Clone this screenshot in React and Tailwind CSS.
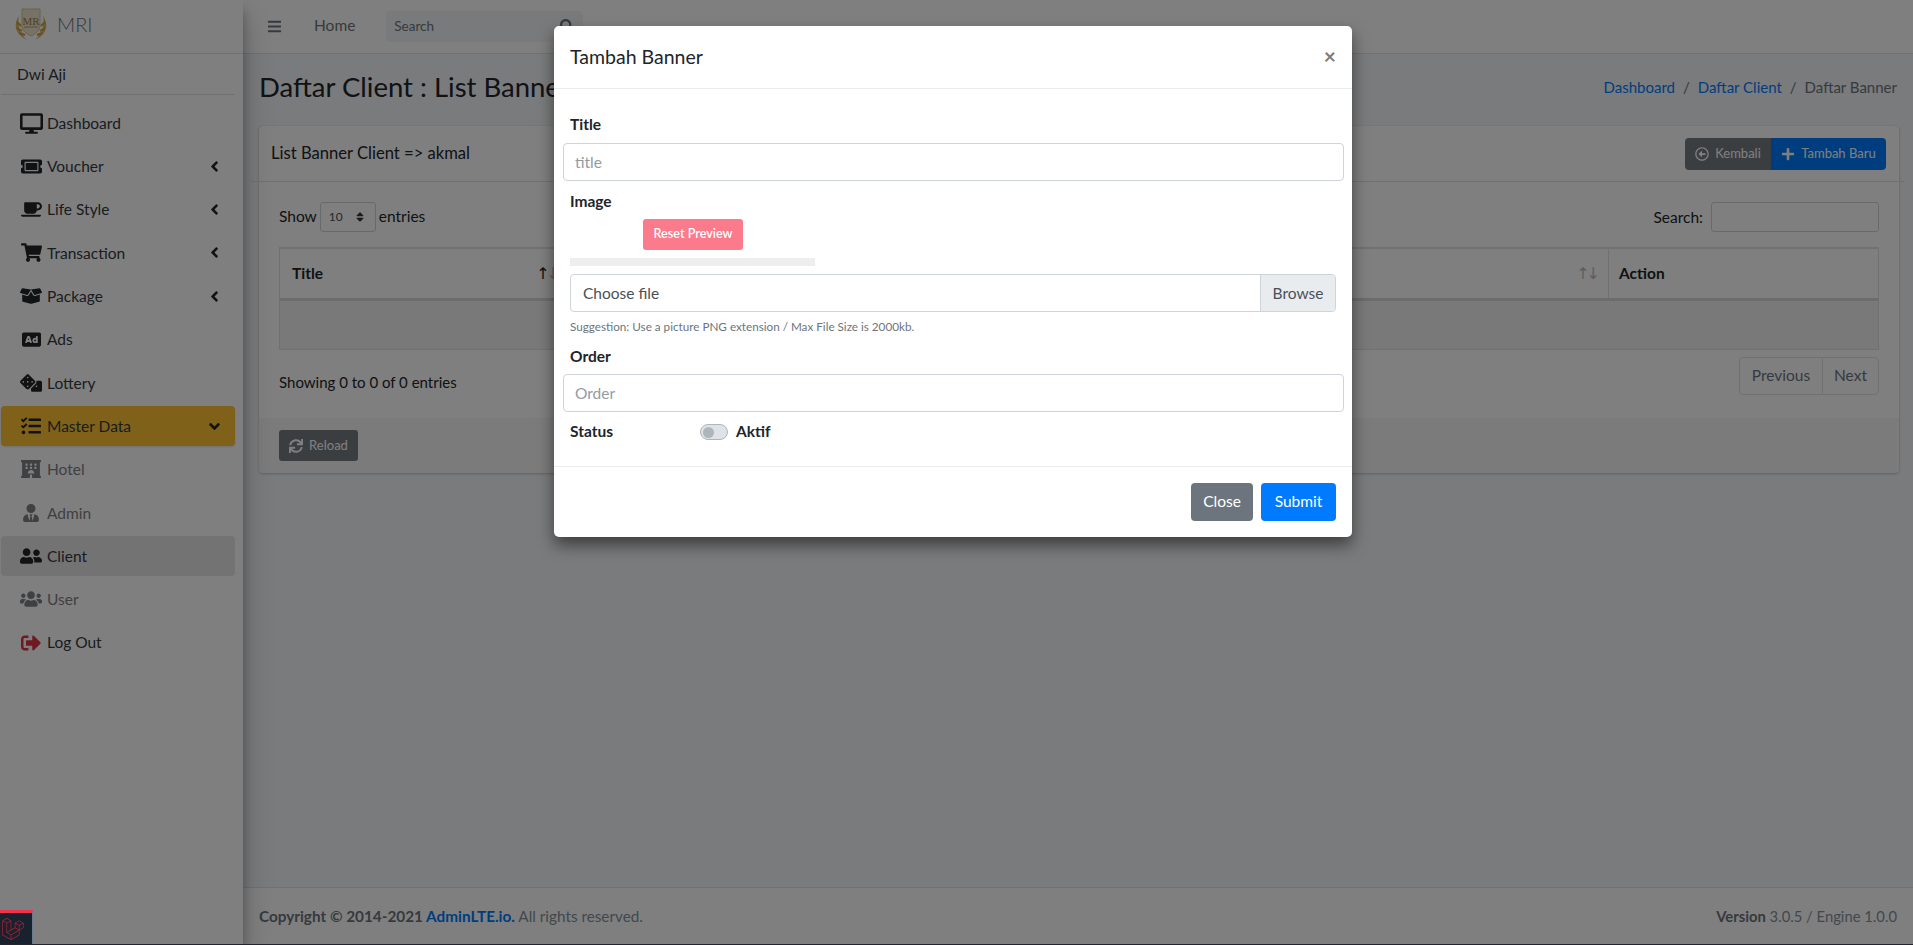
import React from "react";
import {
  FaDesktop, FaTicketAlt, FaCoffee, FaShoppingCart, FaBoxOpen, FaAd, FaDice, FaTasks, FaHotel, FaUserTie,
  FaUserFriends, FaUsers, FaSignOutAlt, FaBars, FaSearch, FaAngleLeft, FaAngleDown, FaRegArrowAltCircleLeft,
  FaPlus, FaSync, FaLaravel, FaSort,
} from "react-icons/fa";

const items = [
  { label: "Dashboard", Icon: FaDesktop, size: 23 },
  { label: "Voucher", Icon: FaTicketAlt, arrow: true },
  { label: "Life Style", Icon: FaCoffee, arrow: true },
  { label: "Transaction", Icon: FaShoppingCart, arrow: true },
  { label: "Package", Icon: FaBoxOpen, arrow: true, size: 22 },
  { label: "Ads", Icon: FaAd, size: 19 },
  { label: "Lottery", Icon: FaDice, size: 22 },
  { label: "Master Data", Icon: FaTasks, arrow: "down", active: "yellow", size: 20 },
  { label: "Hotel", Icon: FaHotel, muted: true, size: 20 },
  { label: "Admin", Icon: FaUserTie, muted: true, size: 18 },
  { label: "Client", Icon: FaUserFriends, active: "gray", size: 22 },
  { label: "User", Icon: FaUsers, muted: true, size: 22 },
  { label: "Log Out", Icon: FaSignOutAlt, red: true, size: 20 },
];

function Logo() {
  return (
    <svg viewBox="0 0 34 34" className="w-[34px] h-[34px] shrink-0">
      <path d="M5 9C-1 17 1 28 13 33C6 27 3 18 5 9Z" fill="#dcb45e" />
      <path d="M29 9C35 17 33 28 21 33C28 27 31 18 29 9Z" fill="#dcb45e" />
      <path d="M3 15L7 19M3 21L8 24M6 26L11 28" stroke="#c99f4b" strokeWidth="2" />
      <path d="M31 15L27 19M31 21L26 24M28 26L23 28" stroke="#c99f4b" strokeWidth="2" />
      <path d="M8 2H26V19C26 24 21 27 17 29C13 27 8 24 8 19Z" fill="#efe4cc" stroke="#d9c393" />
      <text x="17" y="18" textAnchor="middle" fontSize="11" fontFamily="Liberation Serif, serif" fill="#9c7f45">MR</text>
      <path d="M10 20H24" stroke="#b99a5c" strokeWidth="1" />
    </svg>
  );
}

function NavItem({ label, Icon, arrow, active, muted, red, size = 21 }) {
  const bg = active === "yellow" ? "bg-[#ffc233] shadow-sm" : active === "gray" ? "bg-[#e7e7e7]" : "";
  const text = muted ? "text-[#7d8085]" : "text-[#343a40]";
  const iconColor = red ? "text-[#dc3545]" : muted ? "text-[#7d8085]" : "text-[#212529]";
  return (
    <div className={`relative flex items-center h-10 mb-[3.3px] mx-px w-[234px] rounded-[4px] ${bg}`}>
      <span className={`w-[46px] flex justify-center pl-[14px] ${iconColor}`}>
        <Icon size={size} />
      </span>
      <span className={`text-[15.5px] pt-px ${text}`}>{label}</span>
      {arrow && (
        <span className="ml-auto mr-[12px] text-[#212529]">
          {arrow === "down" ? <FaAngleDown size={17} /> : <FaAngleLeft size={17} />}
        </span>
      )}
    </div>
  );
}

function Sidebar() {
  return (
    <aside className="w-[243px] shrink-0 bg-white h-full flex flex-col shadow-[0_14px_28px_rgba(0,0,0,0.25),0_10px_10px_rgba(0,0,0,0.22)] relative z-10">
      <div className="h-[54px] shrink-0 border-b border-[#dee2e6] flex items-center pl-[14px] gap-[9px] pb-[6px]">
        <Logo />
        <span className="text-[20px] font-light text-[#6c757d]">MRI</span>
      </div>
      <div className="h-[41px] mx-px w-[234px] shrink-0 border-b border-[#dee2e6] flex items-center pl-4 pt-px text-[15.5px] text-[#343a40]">
        Dwi Aji
      </div>
      <nav className="pt-2">
        {items.map((it) => (
          <NavItem key={it.label} {...it} />
        ))}
      </nav>
    </aside>
  );
}

function Navbar() {
  return (
    <header className="h-[54px] shrink-0 bg-white border-b border-[#dee2e6] flex items-center pl-[24px] pb-px">
      <FaBars size={15} className="text-[#6c757d]" />
      <span className="ml-[32px] text-[15.5px] text-[#6c757d]">Home</span>
      <div className="ml-[31px] w-[197px] h-[31px] bg-[#f2f4f6] rounded-[4px] flex items-center pl-[8px] pr-[9px] justify-between">
        <span className="text-[13.5px] text-[#6c757d]">Search</span>
        <FaSearch size={14} className="text-[#6c757d]" />
      </div>
    </header>
  );
}

function SortIcon({ dark }) {
  return (
    <span className="flex items-center text-[16px] font-normal -space-x-[3px]" style={{ fontFamily: '"DejaVu Sans", sans-serif' }}>
      <span className={dark ? "text-[#212529]" : "text-[#b9bbbd]"}>↑</span>
      <span className="text-[#b9bbbd]">↓</span>
    </span>
  );
}

function Card() {
  return (
    <section className="ml-4 mr-[14px] h-[347px] bg-white rounded-[4px] shadow-[0_0_1px_rgba(0,0,0,0.125),0_1px_3px_rgba(0,0,0,0.2)] flex flex-col">
      <div className="-ml-2 -mr-[6px] h-[56px] shrink-0 border-b border-[#dee2e6] flex items-center pl-[20px] pr-[19px] justify-between">
        <span className="text-[16.6px] text-[#212529]">List Banner Client =&gt; akmal</span>
        <div className="flex h-[32px] rounded-[4px] overflow-hidden text-white text-[13px]">
          <span className="w-[86px] bg-[#767c82] flex items-center justify-center gap-[6px]">
            <FaRegArrowAltCircleLeft size={14} />
            Kembali
          </span>
          <span className="w-[115px] bg-[#007bff] flex items-center justify-center gap-[6px]">
            <FaPlus size={14} />
            Tambah Baru
          </span>
        </div>
      </div>
      <div className="flex-1 px-5">
        <div className="flex items-center justify-between h-[30px] mt-5 text-[15.5px] text-[#212529]">
          <div className="flex items-center gap-[3px]">
            <span>Show</span>
            <span className="w-[56px] h-[30px] border border-[#ced4da] rounded-[3px] flex items-center justify-between pl-[8px] pr-[9px] text-[12px] text-[#495057]">
              10
              <FaSort size={12} className="text-[#343a40]" />
            </span>
            <span>entries</span>
          </div>
          <div className="flex items-center gap-2">
            <span className="pt-px">Search:</span>
            <span className="w-[168px] h-[30px] border border-[#ced4da] rounded-[3px]" />
          </div>
        </div>
        <div className="mt-[15px] border border-t-2 border-[#dee2e6] text-[#212529]">
          <div className="flex h-[49px] border-b-[3px] border-[#d5d8db] text-[15.5px] font-bold box-content">
            <div className="w-[286px] flex items-center justify-between pl-[12px] pr-[5px] border-r border-[#dee2e6]">
              Title
              <SortIcon dark />
            </div>
            <div className="flex-1 flex items-center pl-[12px] pr-[8px]">
              Status
              <span className="ml-auto">
                <SortIcon />
              </span>
            </div>
            <div className="w-[270px] flex items-center pl-[10px] border-l border-[#dee2e6]">Action</div>
          </div>
          <div className="h-[48px] bg-[#f2f2f2] flex items-center justify-center text-[15.5px]">
            No data available in table
          </div>
        </div>
        <div className="flex items-center justify-between mt-[7px] h-[38px] text-[15.5px]">
          <span className="text-[15px] pt-[12px] text-[#212529]">Showing 0 to 0 of 0 entries</span>
          <div className="flex h-[38px] border border-[#dee2e6] rounded-[4px] text-[#6c757d]">
            <span className="w-[83px] flex items-center justify-center border-r border-[#dee2e6]">Previous</span>
            <span className="w-[55px] flex items-center justify-center">Next</span>
          </div>
        </div>
      </div>
      <div className="h-[55px] shrink-0 bg-[#f7f7f7] rounded-b-[4px] flex items-center px-5">
        <span className="w-[79px] h-[31px] bg-[#767c82] rounded-[3px] flex items-center justify-center gap-[6px] text-white text-[13px]">
          <FaSync size={14} />
          Reload
        </span>
      </div>
    </section>
  );
}

function Content() {
  return (
    <main className="flex-1 min-w-0 bg-[#f4f6f9] flex flex-col h-full">
      <Navbar />
      <div className="h-[72px] shrink-0 flex items-center justify-between pl-4 pr-4 pb-[6px]">
        <h1 className="text-[27.5px] text-[#212529] leading-none">Daftar Client : List Banner</h1>
        <div className="flex items-center gap-[8px] text-[15px]">
          <span className="text-[#007bff]">Dashboard</span>
          <span className="text-[#6c757d]">/</span>
          <span className="text-[#007bff]">Daftar Client</span>
          <span className="text-[#6c757d]">/</span>
          <span className="text-[#6c757d]">Daftar Banner</span>
        </div>
      </div>
      <Card />
      <footer className="mt-auto h-[57px] shrink-0 bg-white border-t border-[#dee2e6] flex items-center justify-between pl-4 pr-[16px] pt-px text-[15.3px] text-[#869099]">
        <span>
          <b className="text-[#6c757d]">Copyright © 2014-2021 </b>
          <b className="text-[#007bff]">AdminLTE.io.</b> All rights reserved.
        </span>
        <span className="text-[14.8px]">
          <b className="text-[#6c757d]">Version</b> 3.0.5 / Engine 1.0.0
        </span>
      </footer>
    </main>
  );
}

function Field({ placeholder }) {
  return (
    <div className="-ml-[7px] w-[781px] h-[38px] border border-[#ced4da] rounded-[4px] flex items-center pl-[11px] pt-px text-[15.5px] text-[#939ba2]">
      {placeholder}
    </div>
  );
}

function Modal() {
  return (
    <div className="absolute left-[554px] top-[26px] w-[798px] h-[511px] bg-white rounded-[5px] shadow-[0_8px_16px_rgba(0,0,0,0.5)] flex flex-col z-30 text-[#212529]">
      <div className="h-[63px] shrink-0 border-b border-[#e9ecef] flex items-center justify-between pl-4 pr-[16px]">
        <h5 className="text-[19.5px] leading-none">Tambah Banner</h5>
        <span className="text-[21px] font-bold text-[#7b7b7b] leading-none pb-1">×</span>
      </div>
      <div className="flex-1 px-4 pt-[23px]">
        <div className="text-[15.5px] font-bold leading-6 mb-[7px]">Title</div>
        <Field placeholder="title" />
        <div className="text-[15.5px] font-bold leading-6 mt-2">Image</div>
        <div className="mt-[6px] ml-[73px] w-[100px] h-[31px] rounded-[3px] bg-[#fb7a8b] text-white text-[12.6px] font-semibold flex items-center justify-center">
          Reset Preview
        </div>
        <div className="mt-2 w-[245px] h-2 bg-[#eeeeee]" />
        <div className="mt-2 w-[766px] h-[38px] border border-[#ced4da] rounded-[4px] flex items-stretch pt-0 text-[15.5px] text-[#495057]">
          <span className="flex-1 flex items-center pl-3 pt-px">Choose file</span>
          <span className="w-[75px] bg-[#e9ecef] border-l border-[#ced4da] rounded-r-[4px] flex items-center justify-center pt-px">Browse</span>
        </div>
        <div className="mt-[5px] text-[11.7px] leading-[18px] text-[#6c757d]">
          Suggestion: Use a picture PNG extension / Max File Size is 2000kb.
        </div>
        <div className="text-[15.5px] font-bold leading-6 mt-[9px] mb-[6px]">Order</div>
        <Field placeholder="Order" />
        <div className="flex items-center h-6 mt-2 text-[15.5px] font-bold">
          <span className="w-[130px]">Status</span>
          <span className="w-[28px] h-4 rounded-full border border-[#adb5bd] bg-[#dfe3e7] flex items-center pl-[2px]">
            <span className="w-[11px] h-[11px] rounded-full bg-[#adb5bd]" />
          </span>
          <span className="ml-2">Aktif</span>
        </div>
      </div>
      <div className="h-[71px] shrink-0 border-t border-[#e9ecef] flex items-center justify-end gap-2 pr-[16px]">
        <span className="w-[62px] h-[38px] rounded-[4px] bg-[#6c757d] text-white text-[15.5px] flex items-center justify-center">Close</span>
        <span className="w-[75px] h-[38px] rounded-[4px] bg-[#007bff] text-white text-[15.5px] flex items-center justify-center">Submit</span>
      </div>
    </div>
  );
}

function DebugBar() {
  return (
    <div className="absolute left-0 bottom-0 z-40 w-full">
      <div className="w-[33px] h-[34px] bg-[#18222e] border-t-[3px] border-r border-t-[#f4304f] border-r-[#6c7a8c] flex items-center pl-[2px]">
        <FaLaravel size={22} className="text-[#ad2032]" />
      </div>
      <div className="h-px bg-[#22242f]" />
    </div>
  );
}

export default function App() {
  return (
    <div className="relative h-[945px] overflow-hidden bg-white" style={{ fontFamily: '"Lato", "Noto Sans", sans-serif' }}>
      <div className="flex h-[944px]">
        <Sidebar />
        <Content />
      </div>
      <div className="absolute inset-0 bg-black/50 z-20" />
      <Modal />
      <DebugBar />
    </div>
  );
}
